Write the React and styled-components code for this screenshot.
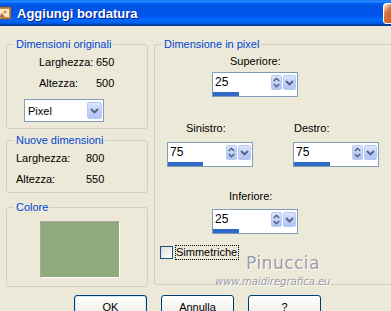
import styled, { createGlobalStyle } from "styled-components";

const GlobalStyle = createGlobalStyle`
  html, body {
    margin: 0;
    padding: 0;
    overflow: hidden;
    background: #ece9d8;
  }
  body {
    font-family: "Liberation Sans", Arial, sans-serif;
    font-size: 11px;
    color: #000;
  }
`;

const Window = styled.div`
  width: 410px;
  height: 311px;
  background: #ece9d8;
  overflow: hidden;
`;

// Luna caption
const TitleBar = styled.div`
  height: 26px;
  display: flex;
  align-items: center;
  background: linear-gradient(
    to bottom,
    #0058ee 0%,
    #3593ff 4%,
    #288eff 6%,
    #127dff 8%,
    #036ffc 10%,
    #0262ee 14%,
    #0057e5 20%,
    #0054e3 24%,
    #0055eb 56%,
    #005bf5 66%,
    #026afe 76%,
    #0062ef 86%,
    #0052d6 92%,
    #0040ab 94%,
    #003092 100%
  );
`;

const TitleIcon = styled.svg`
  margin-left: -4px;
  flex: none;
`;

const TitleText = styled.div`
  margin-left: 5px;
  font-family: "Liberation Sans", Arial, sans-serif;
  font-weight: bold;
  font-size: 13px;
  color: #fff;
  text-shadow: 1px 1px 0 #0a1883;
`;

const CloseButton = styled.div`
  margin-left: auto;
  margin-right: 6px;
  width: 21px;
  height: 21px;
  box-sizing: border-box;
  border: 1px solid #fff;
  border-radius: 3px;
  background: radial-gradient(circle at 90% 90%, #cc4600 0%, #dc6527 55%, #cd7546 70%, #ffccb2 90%, #fff 100%);
`;

const Content = styled.div`
  display: grid;
  grid-template-columns: 142px 250px;
  column-gap: 6px;
  align-items: start;
  padding: 12px 0 0 6px;
`;

const Column = styled.div`
  display: flex;
  flex-direction: column;
`;

const Group = styled.fieldset`
  margin: ${(p) => p.$top || 0}px 0 0 0;
  padding: 0;
  border: 1px solid #d0d0bf;
  border-radius: 3px;
  min-width: 0;
  position: relative;
`;

const Legend = styled.legend`
  margin-left: 7px;
  padding: 0 2px;
  color: #0046d5;
  font-size: 11px;
  line-height: 13px;
`;

const GroupBody = styled.div`
  padding: ${(p) => p.$pad};
`;

const InfoGrid = styled.div`
  display: grid;
  grid-template-columns: ${(p) => p.$col}px auto;
  row-gap: 8px;
  line-height: 13px;
  padding-left: ${(p) => p.$indent || 0}px;
`;

const Select = styled.div`
  margin: 9px 0 0 17px;
  width: 80px;
  height: 23px;
  box-sizing: border-box;
  border: 1px solid #7f9db9;
  background: #fff;
  display: flex;
  align-items: center;
  padding: 0 1px 0 3px;
`;

const SelectText = styled.span`
  flex: 1;
`;

const ArrowButton = styled.div`
  width: ${(p) => p.$w}px;
  height: ${(p) => p.$h}px;
  margin-left: ${(p) => p.$gap || 0}px;
  border-radius: 2px;
  border: 1px solid #b6c8f3;
  box-sizing: border-box;
  background: linear-gradient(to bottom, #dbe5fd, #bccdf7 60%, #b1c4f4);
  display: flex;
  flex-direction: column;
  align-items: center;
  justify-content: center;
  flex: none;
`;

const Swatch = styled.div`
  margin-left: 33px;
  width: 80px;
  height: 57px;
  box-sizing: border-box;
  border: 1px solid;
  border-color: #aca899 #fff #fff #aca899;
  background: #8fab7e;
`;

const PixelBody = styled.div`
  padding: 4px 0 25px 0;
  display: flex;
  flex-direction: column;
`;

const FieldRow = styled.div`
  display: flex;
  margin: ${(p) => p.$top}px 0 0 ${(p) => p.$left}px;
  gap: 40px;
`;

const Field = styled.div`
  display: flex;
  flex-direction: column;
`;

const FieldLabel = styled.div`
  line-height: 13px;
  padding-left: ${(p) => p.$indent}px;
  margin-bottom: ${(p) => p.$gap}px;
`;

const SpinBox = styled.div`
  width: 86px;
  height: 25px;
  box-sizing: border-box;
  border: 1px solid #7f9db9;
  background: #fff;
  display: flex;
  flex-direction: column;
`;

const SpinTop = styled.div`
  height: 19px;
  display: flex;
  align-items: center;
  padding: 0 1px 0 2px;
`;

const SpinValue = styled.span`
  flex: 1;
  font-size: 12px;
  line-height: 13px;
`;

const Track = styled.div`
  height: 4px;
  display: flex;
`;

const Fill = styled.div`
  height: 4px;
  background: #3169c6;
`;

const CheckRow = styled.div`
  display: flex;
  align-items: center;
  margin: 11px 0 0 5px;
  height: 14px;
`;

const CheckBox = styled.div`
  width: 13px;
  height: 13px;
  box-sizing: border-box;
  border: 1px solid #1c5180;
  background: linear-gradient(135deg, #dcdcd7, #fff);
`;

const FocusLabel = styled.span`
  margin-left: 3px;
  outline: 1px dotted #000;
  line-height: 13px;
  padding: 0 1px 0 0;
`;

// watermark stamped over the group
const WaterName = styled.div`
  position: absolute;
  left: 91px;
  top: 202px;
  font-family: "DejaVu Sans", Verdana, sans-serif;
  font-size: 17px;
  letter-spacing: 0.5px;
  color: #9d9da8;
  text-shadow: 1px 1px 0 #fff;
`;

const WaterSite = styled.div`
  position: absolute;
  left: 60px;
  top: 225px;
  font-family: "DejaVu Sans", Verdana, sans-serif;
  font-style: italic;
  font-size: 10px;
  color: #9d9da8;
  text-shadow: 1px 1px 0 #fff;
`;

const ButtonRow = styled.div`
  display: flex;
  gap: 14px;
  padding-left: 74px;
  margin-top: 8px;
`;

const Button = styled.div`
  width: 73px;
  height: 23px;
  box-sizing: border-box;
  border: 1px solid #003c74;
  border-radius: 3px;
  background: linear-gradient(to bottom, #fff, #f4f3ee 60%, #ecebe6 85%, #d6d0c5);
  display: flex;
  align-items: center;
  justify-content: center;
  box-shadow: ${(p) => (p.$default ? "inset 0 0 0 1px #cee7ff, inset 0 -1px 0 1px #6982ee" : "none")};
`;

function ChevronDown() {
  return (
    <svg width="9" height="6" viewBox="0 0 9 6">
      <path d="M1 1 L4.5 4.5 L8 1" fill="none" stroke="#4d6185" strokeWidth="1.8" />
    </svg>
  );
}

function UpDown() {
  return (
    <svg width="7" height="11" viewBox="0 0 7 11">
      <path d="M0.8 4 L3.5 1.3 L6.2 4" fill="none" stroke="#4d6185" strokeWidth="1.5" />
      <path d="M0.8 7 L3.5 9.7 L6.2 7" fill="none" stroke="#4d6185" strokeWidth="1.5" />
    </svg>
  );
}

function Spinner({ label, value, fill, indent, gap }) {
  return (
    <Field>
      <FieldLabel $indent={indent} $gap={gap}>
        {label}
      </FieldLabel>
      <SpinBox>
        <SpinTop>
          <SpinValue>{value}</SpinValue>
          <ArrowButton $w={11} $h={15}>
            <UpDown />
          </ArrowButton>
          <ArrowButton $w={13} $h={15} $gap={1}>
            <ChevronDown />
          </ArrowButton>
        </SpinTop>
        <Track>
          <Fill style={{ width: fill }} />
        </Track>
      </SpinBox>
    </Field>
  );
}

export default function App() {
  return (
    <Window>
      <GlobalStyle />
      <TitleBar>
        <TitleIcon width="16" height="16" viewBox="0 0 16 16">
          <rect x="1" y="2" width="14" height="12" rx="1" fill="#c98b4a" />
          <rect x="3" y="4" width="10" height="8" fill="#f4e7cf" />
          <circle cx="9" cy="7" r="1.6" fill="#e0913a" />
          <path d="M3 12 L6 8 L9 12 Z" fill="#b86a3a" />
          <rect x="1" y="2" width="14" height="12" rx="1" fill="none" stroke="#7a4a20" strokeWidth="0.8" />
        </TitleIcon>
        <TitleText>Aggiungi bordatura</TitleText>
        <CloseButton />
      </TitleBar>

      <Content>
        <Column>
          <Group>
            <Legend>Dimensioni originali</Legend>
            <GroupBody $pad="5px 0 6px 0">
              <InfoGrid $col={57} $indent={32}>
                <span>Larghezza:</span>
                <span>650</span>
                <span>Altezza:</span>
                <span>500</span>
              </InfoGrid>
              <Select>
                <SelectText>Pixel</SelectText>
                <ArrowButton $w={15} $h={17}>
                  <ChevronDown />
                </ArrowButton>
              </Select>
            </GroupBody>
          </Group>

          <Group $top={5}>
            <Legend>Nuove dimensioni</Legend>
            <GroupBody $pad="5px 0 6px 9px">
              <InfoGrid $col={70}>
                <span>Larghezza:</span>
                <span>800</span>
                <span>Altezza:</span>
                <span>550</span>
              </InfoGrid>
            </GroupBody>
          </Group>

          <Group $top={8}>
            <Legend>Colore</Legend>
            <GroupBody $pad="7px 0 8px 0">
              <Swatch />
            </GroupBody>
          </Group>
        </Column>

        <Group>
          <Legend>Dimensione in pixel</Legend>
          <PixelBody>
            <FieldRow $top={0} $left={57}>
              <Spinner label="Superiore:" value="25" fill={26} indent={18} gap={4} />
            </FieldRow>
            <FieldRow $top={25} $left={12}>
              <Spinner label="Sinistro:" value="75" fill={35} indent={19} gap={7} />
              <Spinner label="Destro:" value="75" fill={36} indent={1} gap={7} />
            </FieldRow>
            <FieldRow $top={23} $left={57}>
              <Spinner label="Inferiore:" value="25" fill={26} indent={17} gap={6} />
            </FieldRow>
            <CheckRow>
              <CheckBox />
              <FocusLabel>Simmetriche</FocusLabel>
            </CheckRow>
          </PixelBody>
          <WaterName>Pinuccia</WaterName>
          <WaterSite>www.maidiregrafica.eu</WaterSite>
        </Group>
      </Content>

      <ButtonRow>
        <Button $default>OK</Button>
        <Button>Annulla</Button>
        <Button>?</Button>
      </ButtonRow>
    </Window>
  );
}
